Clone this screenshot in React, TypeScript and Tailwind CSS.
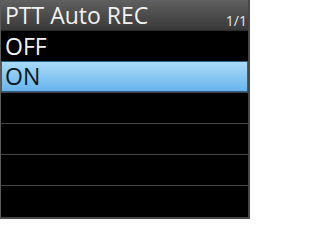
export default function App() {
  const rows = ["OFF", "ON", "", "", "", ""];
  const selected = 1;

  return (
    <div
      className="w-[250px] h-[219px] bg-black flex flex-col border-l border-l-[#5a5a5a] border-r-2 border-r-[#474747] border-b-2 border-b-[#474747] overflow-hidden"
      style={{ fontFamily: '"Open Sans", "Noto Sans", sans-serif' }}
    >
      {/* Title bar */}
      <div className="h-[31px] shrink-0 flex items-end justify-between pl-[4px] pr-[1px] bg-gradient-to-b from-[#606060] to-[#393939] border-b border-b-[#2a2a2a]">
        <span className="text-[23px] leading-[29px] text-[#f2f2f2]">PTT Auto REC</span>
        <span className="text-[14px] leading-[16px] mb-[1px] text-[#e6e6e6]">1/1</span>
      </div>

      {/* Options */}
      {rows.map((label, i) => (
        <div
          key={i}
          className={
            i === selected
              ? "h-[31px] shrink-0 flex items-center pl-[3px] bg-gradient-to-b from-[#a9daf9] to-[#68b4ec] border border-[#2c6186] text-[#0b1724]"
              : i === 0
              ? "h-[30px] shrink-0 flex items-center pl-[4px] text-[#f2f2f2]"
              : "h-[31px] shrink-0 flex items-center pl-[4px] border-t border-t-[#454545] text-[#f2f2f2]"
          }
        >
          <span className="text-[23px] leading-none">{label}</span>
        </div>
      ))}
    </div>
  );
}
